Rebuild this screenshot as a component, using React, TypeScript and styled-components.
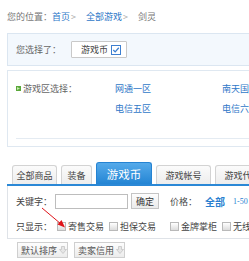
import React from "react";
import styled, { createGlobalStyle } from "styled-components";

const Global = createGlobalStyle`
  html, body { margin: 0; padding: 0; background: #fff; overflow: hidden; }
  body { font-family: "Noto Sans CJK SC", "Noto Sans", sans-serif; font-size: 9px; color: #555; }
`;

const Page = styled.div`
  width: 340px;
  padding-left: 7px;
  box-sizing: border-box;
`;

const Crumbs = styled.div`
  height: 33px;
  display: flex;
  align-items: center;
  color: #777;
  white-space: nowrap;
`;

const CrumbLink = styled.span`
  color: #2f78c8;
`;

const CrumbSep = styled.span`
  color: #aaa;
  margin: 0 10px 0 1px;
`;

const ChosenBar = styled.div`
  height: 33px;
  box-sizing: border-box;
  border: 1px solid #dbe6f1;
  background: #f3f8fd;
  display: flex;
  align-items: center;
  padding-left: 8px;
  color: #666;
`;

const Tag = styled.span`
  margin-left: 10px;
  height: 17px;
  box-sizing: border-box;
  border: 1px solid #c9c9c9;
  background: #fff;
  display: inline-flex;
  align-items: center;
  padding: 0 5px 0 9px;
  color: #444;
  border-radius: 1px;
  gap: 3px;
`;

const ZoneBox = styled.div`
  margin-top: 4px;
  border: 1px solid #dfe8f1;
  padding: 7px 0 7px 8px;
`;

const ZoneRow = styled.div`
  display: grid;
  grid-template-columns: 99px 107px 107px;
  grid-auto-rows: 20px;
  align-items: center;
`;

const ZoneTitle = styled.span`
  display: flex;
  align-items: center;
  gap: 2px;
  color: #666;
  grid-row: 1;
`;

const ZoneLink = styled.span`
  color: #2f78c8;
  white-space: nowrap;
`;

const Divider = styled.div`
  height: 1px;
  background: #e4ebf2;
  margin-top: 20px;
`;

const Tabs = styled.div`
  margin-top: 15px;
  display: flex;
  align-items: flex-end;
  gap: 4px;
  padding-left: 5px;
  border-bottom: 2px solid #2b88d6;
`;

const Tab = styled.div<{ $w: number; $active?: boolean }>`
  width: ${(p) => p.$w}px;
  height: ${(p) => (p.$active ? 22 : 19)}px;
  box-sizing: border-box;
  display: flex;
  align-items: center;
  justify-content: center;
  border: 1px solid ${(p) => (p.$active ? "#2583d2" : "#d3d3d3")};
  border-bottom: none;
  border-radius: 3px 3px 0 0;
  background: ${(p) =>
    p.$active
      ? "linear-gradient(#55aaea, #2485d4)"
      : "linear-gradient(#fbfbfb, #ededed)"};
  color: ${(p) => (p.$active ? "#fff" : "#444")};
  font-size: ${(p) => (p.$active ? 11.5 : 9)}px;
  white-space: nowrap;
  overflow: hidden;
`;

const FilterBox = styled.div`
  position: relative;
  border: 1px solid #dfe3e8;
  border-top: none;
  padding: 7px 0 4px 8px;
  display: flex;
  flex-direction: column;
  gap: 9px;
`;

const FilterRow = styled.div`
  height: 16px;
  display: flex;
  align-items: center;
  white-space: nowrap;
  color: #444;
`;

const Input = styled.div`
  width: 73px;
  height: 15px;
  box-sizing: border-box;
  border: 1px solid #bdbdbd;
  background: #fff;
  margin-left: 3px;
`;

const Button = styled.span`
  margin-left: 3px;
  height: 16px;
  width: 28px;
  box-sizing: border-box;
  border: 1px solid #c4c4c4;
  background: linear-gradient(#fdfdfd, #ebebeb);
  display: inline-flex;
  align-items: center;
  justify-content: center;
  color: #333;
`;

const PriceLabel = styled.span`
  margin-left: 11px;
`;

const PriceLink = styled.span<{ $strong?: boolean }>`
  margin-left: 8px;
  color: #2a7fd0;
  font-weight: ${(p) => (p.$strong ? 700 : 400)};
  font-size: ${(p) => (p.$strong ? 10 : 8)}px;
  font-family: ${(p) => (p.$strong ? "inherit" : '"Liberation Serif", serif')};
`;

const Check = styled.span<{ $ml: number }>`
  margin-left: ${(p) => p.$ml}px;
  margin-right: 2px;
  width: 9px;
  height: 9px;
  box-sizing: border-box;
  border: 1px solid #b9b9b9;
  background: linear-gradient(#fff, #dcdcdc);
`;

const Arrow = styled.svg`
  position: absolute;
  left: 30px;
  top: 16px;
  pointer-events: none;
`;

const SortBar = styled.div`
  margin-top: 3px;
  padding-left: 10px;
  display: flex;
  gap: 6px;
`;

const SortButton = styled.span`
  height: 16px;
  width: 51px;
  box-sizing: border-box;
  border: 1px solid #cfcfcf;
  background: linear-gradient(#fdfdfd, #ececec);
  display: inline-flex;
  align-items: center;
  padding-left: 3px;
  gap: 2px;
  color: #555;
  white-space: nowrap;
`;

const CheckedIcon = () => (
  <svg width="10" height="10" viewBox="0 0 10 10">
    <rect x="0.5" y="0.5" width="9" height="9" fill="#fff" stroke="#3d7fd0" />
    <path d="M2.3 5 L4.2 6.9 L7.8 2.8" fill="none" stroke="#3d7fd0" strokeWidth="1.3" />
  </svg>
);

const ZoneIcon = () => (
  <svg width="5" height="5" viewBox="0 0 5 5">
    <rect x="0" y="0" width="5" height="5" fill="#5aa83a" />
    <path d="M1 1 L4 2.5 L1 4 Z" fill="#c8eab0" />
  </svg>
);

const DownIcon = () => (
  <svg width="8" height="8" viewBox="0 0 8 8">
    <path d="M2.5 0.5 H5.5 V3.5 H7.5 L4 7.5 L0.5 3.5 H2.5 Z" fill="#e6e6e6" stroke="#c4c4c4" strokeWidth="0.8" />
  </svg>
);

export default function App() {
  return (
    <>
      <Global />
      <Page>
        <Crumbs>
          您的位置：<CrumbLink>首页</CrumbLink>
          <CrumbSep>&gt;</CrumbSep>
          <CrumbLink>全部游戏</CrumbLink>
          <CrumbSep>&gt;</CrumbSep>
          剑灵
        </Crumbs>
        <ChosenBar>
          您选择了：
          <Tag>
            游戏币 <CheckedIcon />
          </Tag>
        </ChosenBar>
        <ZoneBox>
          <ZoneRow>
            <ZoneTitle>
              <ZoneIcon />
              游戏区选择：
            </ZoneTitle>
            <ZoneLink>网通一区</ZoneLink>
            <ZoneLink>南天国</ZoneLink>
            <span />
            <ZoneLink>电信五区</ZoneLink>
            <ZoneLink>电信六区</ZoneLink>
          </ZoneRow>
          <Divider />
        </ZoneBox>
        <Tabs>
          <Tab $w={45}>全部商品</Tab>
          <Tab $w={31}>装备</Tab>
          <Tab $w={56} $active>
            游戏币
          </Tab>
          <Tab $w={55}>游戏帐号</Tab>
          <Tab $w={55}>游戏代练</Tab>
        </Tabs>
        <FilterBox>
          <FilterRow>
            关键字：
            <Input />
            <Button>确定</Button>
            <PriceLabel>价格：</PriceLabel>
            <PriceLink $strong>全部</PriceLink>
            <PriceLink>1-50</PriceLink>
          </FilterRow>
          <FilterRow>
            只显示：
            <Check $ml={5} />
            寄售交易
            <Check $ml={5} />
            担保交易
            <Check $ml={14} />
            金牌掌柜
            <Check $ml={5} />
            无线
          </FilterRow>
          <Arrow width="40" height="30" viewBox="0 0 40 30">
            <line x1="4" y1="6" x2="23" y2="22" stroke="#e0141a" strokeWidth="1" />
            <path d="M27 25.5 L19.5 22.5 L23.5 18 Z" fill="#e0141a" />
          </Arrow>
        </FilterBox>
        <SortBar>
          <SortButton>
            默认排序 <DownIcon />
          </SortButton>
          <SortButton>
            卖家信用 <DownIcon />
          </SortButton>
        </SortBar>
      </Page>
    </>
  );
}
